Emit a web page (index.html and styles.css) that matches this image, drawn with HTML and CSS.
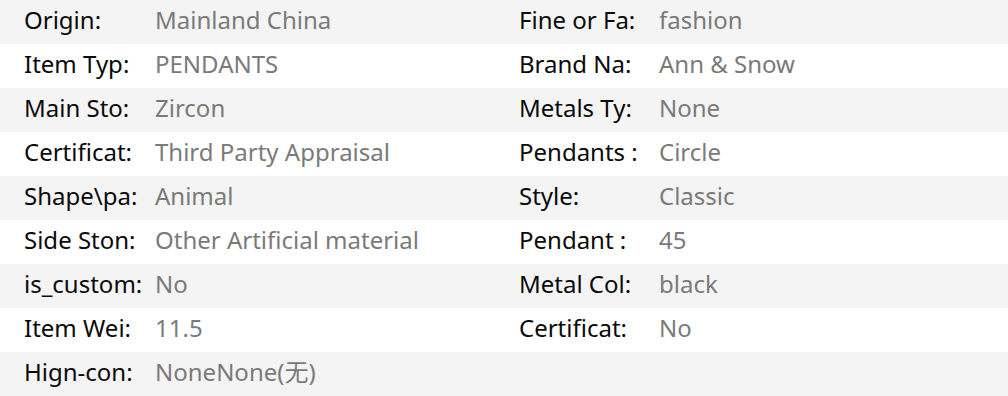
FILE: index.html
```html
<!DOCTYPE html>
<html>
<head>
<meta charset="utf-8">
<link rel="stylesheet" href="styles.css">
</head>
<body>
<div class="specs">
  <div class="row"><span class="k">Origin:</span><span class="v">Mainland China</span><span class="k">Fine or Fa:</span><span class="v">fashion</span></div>
  <div class="row"><span class="k">Item Typ:</span><span class="v">PENDANTS</span><span class="k">Brand Na:</span><span class="v">Ann &amp; Snow</span></div>
  <div class="row"><span class="k">Main Sto:</span><span class="v">Zircon</span><span class="k">Metals Ty:</span><span class="v">None</span></div>
  <div class="row"><span class="k">Certificat:</span><span class="v">Third Party Appraisal</span><span class="k">Pendants :</span><span class="v">Circle</span></div>
  <div class="row"><span class="k">Shape\pa:</span><span class="v">Animal</span><span class="k">Style:</span><span class="v">Classic</span></div>
  <div class="row"><span class="k">Side Ston:</span><span class="v">Other Artificial material</span><span class="k">Pendant :</span><span class="v">45</span></div>
  <div class="row"><span class="k">is_custom:</span><span class="v">No</span><span class="k">Metal Col:</span><span class="v">black</span></div>
  <div class="row"><span class="k">Item Wei:</span><span class="v">11.5</span><span class="k">Certificat:</span><span class="v">No</span></div>
  <div class="row"><span class="k">Hign-con:</span><span class="v">NoneNone(无)</span><span class="k"></span><span class="v"></span></div>
</div>
</body>
</html>
```
FILE: styles.css
```css
html, body { margin: 0; padding: 0; background: #fff; }
body { font-family: "Noto Sans", "Noto Sans CJK SC", sans-serif; font-size: 24px; }
.specs { width: 1008px; }
.row {
  display: grid;
  grid-template-columns: 131px 364px 140px 1fr;
  height: 44px;
  align-items: center;
  padding-left: 24px;
  padding-bottom: 4px;
  box-sizing: border-box;
  white-space: nowrap;
  line-height: 30px;
}
.row:nth-child(odd) { background: #f4f4f4; }
.k { color: #0a0a0a; }
.v { color: #7a7a7a; }
```
